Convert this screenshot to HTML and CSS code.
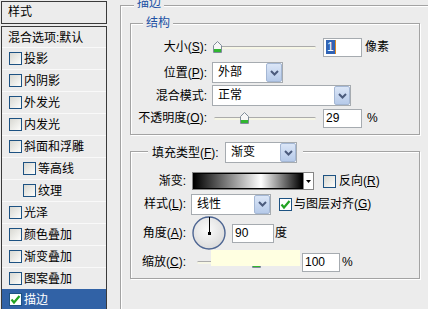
FILE: index.html
```html
<!DOCTYPE html>
<html lang="zh-CN">
<head>
    <meta charset="UTF-8">
    <meta name="viewport" content="width=device-width, initial-scale=1.0">
    <title>图层样式 - 描边</title>
    <link rel="stylesheet" href="styles.css">
</head>
<body>
<div class="dialog">
    <div class="styles">
        <div class="styles-head">样式</div>
        <ul class="styles-list">
            <li class="item blend">混合选项:默认</li>
            <li class="item"><span class="check"></span>投影</li>
            <li class="item"><span class="check"></span>内阴影</li>
            <li class="item"><span class="check"></span>外发光</li>
            <li class="item"><span class="check"></span>内发光</li>
            <li class="item"><span class="check"></span>斜面和浮雕</li>
            <li class="item sub"><span class="check"></span>等高线</li>
            <li class="item sub"><span class="check"></span>纹理</li>
            <li class="item"><span class="check"></span>光泽</li>
            <li class="item"><span class="check"></span>颜色叠加</li>
            <li class="item"><span class="check"></span>渐变叠加</li>
            <li class="item"><span class="check"></span>图案叠加</li>
            <li class="item selected">
                <span class="check on">
                    <svg width="11" height="11" viewBox="0 0 11 11"><path d="M1.5 5.5 L4 8.5 L9.5 2" fill="none" stroke="#22a322" stroke-width="2.2"/></svg>
                </span>描边
            </li>
        </ul>
    </div>

    <div class="options">
        <div class="group outer">
            <div class="legend">描边</div>

            <div class="group struct">
                <div class="legend">结构</div>

                <div class="row r-size">
                    <span class="lbl">大小(<u>S</u>):</span>
                    <div class="slider">
                        <div class="track"></div>
                        <svg class="thumb" style="left: 1px" width="9" height="12" viewBox="0 0 9 12"><path d="M4.5 0.5 L8.5 4.5 L8.5 11.5 L0.5 11.5 L0.5 4.5 Z" fill="#f6f6f6" stroke="#7f8c99"/><rect x="1" y="8" width="7" height="3" fill="#30b630"/></svg>
                    </div>
                    <div class="field w-39 gap-7"><span class="picked">1</span><span class="caret"></span></div>
                    <span class="unit">像素</span>
                </div>

                <div class="row r-pos">
                    <span class="lbl">位置(<u>P</u>):</span>
                    <div class="select w-71">
                        <span class="value">外部</span>
                        <span class="btn"><svg width="9" height="6" viewBox="0 0 9 6"><path d="M1 1 L4.5 4.5 L8 1" fill="none" stroke="#4b5b7c" stroke-width="2"/></svg></span>
                    </div>
                </div>

                <div class="row r-blend">
                    <span class="lbl">混合模式:</span>
                    <div class="select w-139">
                        <span class="value">正常</span>
                        <span class="btn"><svg width="9" height="6" viewBox="0 0 9 6"><path d="M1 1 L4.5 4.5 L8 1" fill="none" stroke="#4b5b7c" stroke-width="2"/></svg></span>
                    </div>
                </div>

                <div class="row r-opacity">
                    <span class="lbl">不透明度(<u>O</u>):</span>
                    <div class="slider">
                        <div class="track"></div>
                        <svg class="thumb" style="left: 28px" width="9" height="12" viewBox="0 0 9 12"><path d="M4.5 0.5 L8.5 4.5 L8.5 11.5 L0.5 11.5 L0.5 4.5 Z" fill="#f6f6f6" stroke="#7f8c99"/><rect x="1" y="8" width="7" height="3" fill="#30b630"/></svg>
                    </div>
                    <div class="field w-39 gap-7">29</div>
                    <span class="unit pct">%</span>
                </div>
            </div>

            <div class="group fill">
                <div class="fill-head">
                    <span class="head-lbl">填充类型(<u>F</u>):</span>
                    <div class="select w-72">
                        <span class="value">渐变</span>
                        <span class="btn"><svg width="9" height="6" viewBox="0 0 9 6"><path d="M1 1 L4.5 4.5 L8 1" fill="none" stroke="#4b5b7c" stroke-width="2"/></svg></span>
                    </div>
                </div>

                <div class="row r-grad">
                    <span class="lbl">渐变:</span>
                    <div class="grad">
                        <span class="grad-fill"></span>
                        <span class="grad-btn"><svg width="5" height="3" viewBox="0 0 5 3"><path d="M0 0 L5 0 L2.5 3 Z" fill="#000"/></svg></span>
                    </div>
                    <span class="check gap-9"></span>
                    <span class="opt">反向(<u>R</u>)</span>
                </div>

                <div class="row r-style">
                    <span class="lbl">样式(<u>L</u>):</span>
                    <div class="select w-80">
                        <span class="value">线性</span>
                        <span class="btn"><svg width="9" height="6" viewBox="0 0 9 6"><path d="M1 1 L4.5 4.5 L8 1" fill="none" stroke="#4b5b7c" stroke-width="2"/></svg></span>
                    </div>
                    <span class="check on gap-8">
                        <svg width="11" height="11" viewBox="0 0 11 11"><path d="M1.5 5.5 L4 8.5 L9.5 2" fill="none" stroke="#22a322" stroke-width="2.2"/></svg>
                    </span>
                    <span class="opt">与图层对齐(<u>G</u>)</span>
                </div>

                <div class="row r-angle">
                    <span class="lbl">角度(<u>A</u>):</span>
                    <svg class="dial" width="34" height="34" viewBox="0 0 34 34">
                        <defs>
                            <radialGradient id="dialFill" cx="45%" cy="40%" r="65%">
                                <stop offset="0" stop-color="#fbfbfb"/>
                                <stop offset="1" stop-color="#d9d9d9"/>
                            </radialGradient>
                        </defs>
                        <circle cx="17" cy="17" r="16" fill="url(#dialFill)" stroke="#4d6592" stroke-width="1.4"/>
                        <line x1="17.5" y1="17" x2="17.5" y2="1" stroke="#000" stroke-width="1"/>
                        <rect x="16" y="16" width="3" height="3" fill="#000"/>
                    </svg>
                    <div class="field w-42 gap-6">90</div>
                    <span class="unit deg">度</span>
                </div>

                <div class="row r-scale">
                    <span class="lbl">缩放(<u>C</u>):</span>
                    <div class="slider scale">
                        <div class="track"></div>
                        <svg class="thumb" style="left: 57px" width="9" height="12" viewBox="0 0 9 12"><path d="M4.5 0.5 L8.5 4.5 L8.5 11.5 L0.5 11.5 L0.5 4.5 Z" fill="#f6f6f6" stroke="#7f8c99"/><rect x="1" y="8" width="7" height="3" fill="#30b630"/></svg>
                        <div class="tip"></div>
                    </div>
                    <div class="field w-38 gap-3">100</div>
                    <span class="unit pct2">%</span>
                </div>
            </div>
        </div>
    </div>
</div>
</body>
</html>
```

FILE: styles.css
```css
* {
    box-sizing: border-box;
}
body {
    margin: 0;
    width: 428px;
    height: 309px;
    overflow: hidden;
    background-color: #ececec;
    font-family: "Liberation Sans", "Noto Sans CJK SC", sans-serif;
    font-size: 12px;
    line-height: 14px;
    color: #000;
}
.dialog {
    display: flex;
    height: 309px;
}

/* left column: style list */
.styles {
    flex: none;
    width: 106px;
    margin: 1px 0 0 1px;
    display: flex;
    flex-direction: column;
}
.styles-head {
    height: 23px;
    border: 1px solid #3a3a3a;
    padding-left: 6px;
    line-height: 20px;
}
.styles-list {
    flex: 1;
    list-style: none;
    margin: 2px 0 0;
    padding: 0;
    border: 1px solid #3a3a3a;
    border-bottom: none;
}
.item {
    display: flex;
    align-items: center;
    height: 22px;
    padding-left: 7px;
    border-top: 1px solid #f9f9f9;
}
.item .check {
    margin-right: 2px;
}
.item.blend {
    height: 20px;
    border-top: none;
    padding-left: 6px;
    padding-top: 2px;
}
.item.sub {
    padding-left: 21px;
}
.item.selected {
    background-color: #3162a6;
    border-top-color: #3162a6;
    color: #fff;
    height: 20px;
}

.check {
    flex: none;
    width: 13px;
    height: 13px;
    border: 1px solid #1d5282;
    background: linear-gradient(135deg, #d8d8d2, #fdfdfb);
    display: flex;
    align-items: center;
    justify-content: center;
}
.check.on {
    background: #fff;
}

/* right column: options */
.options {
    flex: 1;
    min-width: 0;
}
.group {
    border: 1px solid #a3a3a3;
    box-shadow: 1px 1px 0 #fff, inset 1px 1px 0 #fff;
}
.legend {
    display: table;
    padding: 0 3px;
    background-color: #ececec;
    color: #2050a4;
    line-height: 12px;
}
/* outer box runs off the right and bottom of the window */
.outer {
    width: 308px;
    height: 304px;
    margin: 5px 0 0 13px;
    padding-left: 9px;
    border-right: none;
    border-bottom: none;
    box-shadow: inset 1px 1px 0 #fff;
}
.outer > .legend {
    margin: -9px 0 0 4px;
}
.struct {
    width: 290px;
    height: 112px;
    margin-top: 14px;
}
.struct > .legend {
    margin: -7px 0 0 12px;
}
.fill {
    width: 290px;
    height: 128px;
    margin-top: 16px;
}

.row {
    display: flex;
    align-items: center;
}
.lbl {
    flex: none;
    text-align: right;
    margin-right: 5px;
    white-space: nowrap;
}
.struct .lbl {
    width: 76px;
}
.fill .lbl {
    width: 55px;
}
.r-size { height: 20px; margin-top: 8px; }
.r-pos { height: 21px; margin-top: 5px; }
.r-blend { height: 21px; margin-top: 2px; }
.r-opacity { height: 20px; margin-top: 2px; }

.fill-head {
    display: flex;
    align-items: center;
    width: fit-content;
    height: 21px;
    margin: -10px 0 0 17px;
    padding: 0 6px 0 4px;
    background-color: #ececec;
}
.head-lbl {
    width: 73px;
}
.r-grad { height: 18px; margin-top: 9px; }
.r-style { height: 20px; margin-top: 4px; }
.r-angle { height: 34px; margin-top: 2px; }
.r-scale { height: 20px; margin-top: 2px; }

/* sliders */
.slider {
    flex: none;
    position: relative;
    width: 104px;
    height: 20px;
}
.slider.scale {
    margin-left: 4px;
}
.track {
    margin: 9px 0 0 2px;
    height: 3px;
    border-radius: 2px;
    border-top: 1px solid #ababab;
    background-color: #f6f6e6;
}
.thumb {
    position: absolute;
    top: 4px;
}
.tip {
    position: absolute;
    left: 16px;
    top: -2px;
    width: 89px;
    height: 16px;
    background-color: #ffffe1;
}

/* text boxes */
.field {
    flex: none;
    display: flex;
    align-items: center;
    height: 19px;
    border: 1px solid #a6abb0;
    background-color: #fff;
    padding-left: 2px;
}
.picked {
    background-color: #3163b5;
    color: #fff;
    padding: 0 1px;
}
.caret {
    width: 1px;
    height: 14px;
    background-color: #d88a28;
}
.w-38 { width: 38px; }
.w-39 { width: 39px; }
.w-42 { width: 42px; }
.gap-3 { margin-left: 3px; }
.gap-6 { margin-left: 6px; }
.gap-7 { margin-left: 7px; }
.gap-8 { margin-left: 8px; }
.gap-9 { margin-left: 9px; }

.unit { margin-left: 3px; }
.unit.pct { margin-left: 5px; }
.unit.pct2 { margin-left: 2px; }
.unit.deg { margin-left: 1px; }

/* drop-downs */
.select {
    flex: none;
    display: flex;
    height: 21px;
    border: 1px solid #a6abb0;
    background-color: #fff;
}
.select .value {
    flex: 1;
    padding-left: 5px;
    line-height: 19px;
}
.select .btn {
    flex: none;
    width: 16px;
    border: 1px solid #a4b7d4;
    border-radius: 2px;
    background: linear-gradient(#dbe6f7, #b6cae9);
    display: flex;
    align-items: center;
    justify-content: center;
}
.w-71 { width: 71px; }
.w-72 { width: 72px; }
.w-80 { width: 80px; }
.w-139 { width: 139px; }

/* gradient picker */
.grad {
    flex: none;
    display: flex;
    width: 122px;
    height: 18px;
    margin-left: 1px;
    border: 1px solid #868686;
    background-color: #fff;
}
.grad-fill {
    flex: 1;
    border: 1px solid #000;
    background: linear-gradient(to right, #000 0%, #fff 62%, #000 100%);
}
.grad-btn {
    flex: none;
    width: 10px;
    border-left: 1px solid #868686;
    display: flex;
    align-items: center;
    justify-content: center;
}
.opt {
    margin-left: 3px;
    white-space: nowrap;
}
.r-style .opt {
    margin-left: 2px;
}

.dial {
    flex: none;
    margin-left: 1px;
}
```
